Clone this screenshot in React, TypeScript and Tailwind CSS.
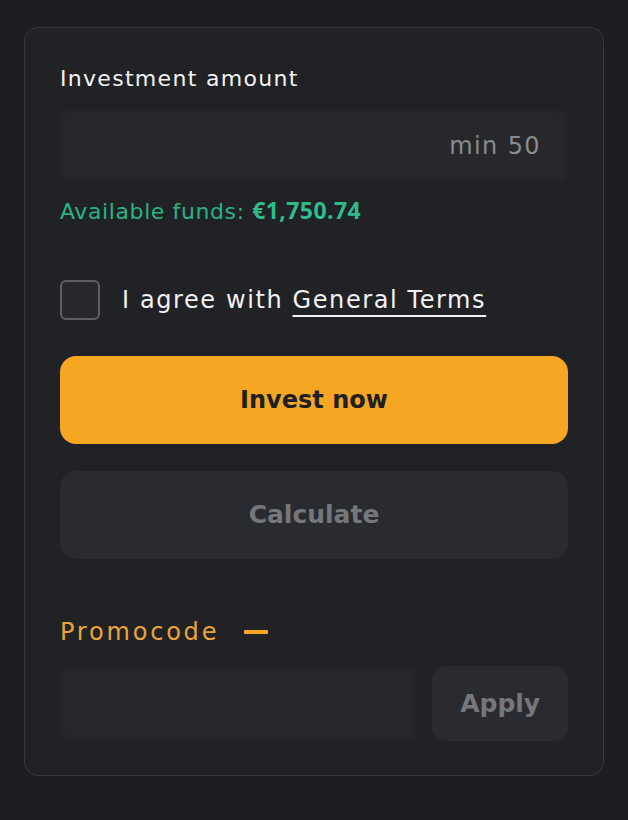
import React from "react";

const App: React.FC = () => {
  return (
    <div className="min-h-screen bg-[#1d1e22] pt-[27px] pl-[24px] font-['DejaVu_Sans',sans-serif]">
      <div className="w-[580px] h-[749px] rounded-[14px] border border-[#36383c] bg-[#212226] px-[35px] pt-[36px]">
        <div className="h-[30px] leading-[30px] text-[22px] tracking-[1.3px] text-[#f2f2f2]">
          Investment amount
        </div>
        <input
          type="text"
          placeholder="min 50"
          className="mt-[15px] block h-[73px] w-full rounded-[6px] bg-[#26282b] pr-[27px] text-right text-[24px] tracking-[1.4px] text-white shadow-[inset_0_0_10px_rgba(0,0,0,0.18)] outline-none placeholder:text-[#8a8b8e]"
        />
        <div className="mt-[14px] h-[28px] leading-[28px] text-[22px] tracking-[0.6px] text-[#29b384]">
          Available funds:{" "}
          <span className="font-['Open_Sans',sans-serif] text-[23px] font-bold tracking-[0.4px] text-[#2ebd8a]">
            €1,750.74
          </span>
        </div>

        <div className="mt-[56px] flex h-[40px] items-center gap-[22px]">
          <div className="h-[40px] w-[40px] rounded-[6px] border-2 border-[#5d5f63] bg-[#28292e]" />
          <span className="text-[24px] leading-[40px] tracking-[1.6px] text-[#f2f2f2]">
            I agree with{" "}
            <span className="underline decoration-[2px] underline-offset-[7px]">
              General Terms
            </span>
          </span>
        </div>

        <button className="mt-[36px] flex h-[88px] w-full items-center justify-center rounded-[16px] bg-[#f5a623] text-[24px] font-bold text-[#1f2024]">
          Invest now
        </button>
        <button className="mt-[27px] flex h-[88px] w-full items-center justify-center rounded-[16px] bg-[#2a2b30] text-[25px] font-bold text-[#76777b]">
          Calculate
        </button>

        <div className="mt-[58px] flex h-[30px] items-center">
          <span className="text-[24px] leading-[30px] tracking-[2.8px] text-[#eaa53a]">
            Promocode
          </span>
          <span className="ml-[25px] h-[4px] w-[24px] rounded-[1px] bg-[#f5a623]" />
        </div>

        <div className="mt-[19px] flex h-[75px] gap-[16px]">
          <input
            type="text"
            className="block h-full w-[357px] rounded-[6px] bg-[#26282b] px-4 text-[22px] text-white shadow-[inset_0_0_10px_rgba(0,0,0,0.18)] outline-none"
          />
          <button className="flex h-full w-[136px] items-center justify-center rounded-[14px] bg-[#2a2b30] text-[25px] font-bold text-[#76777b]">
            Apply
          </button>
        </div>
      </div>
    </div>
  );
};

export default App;
